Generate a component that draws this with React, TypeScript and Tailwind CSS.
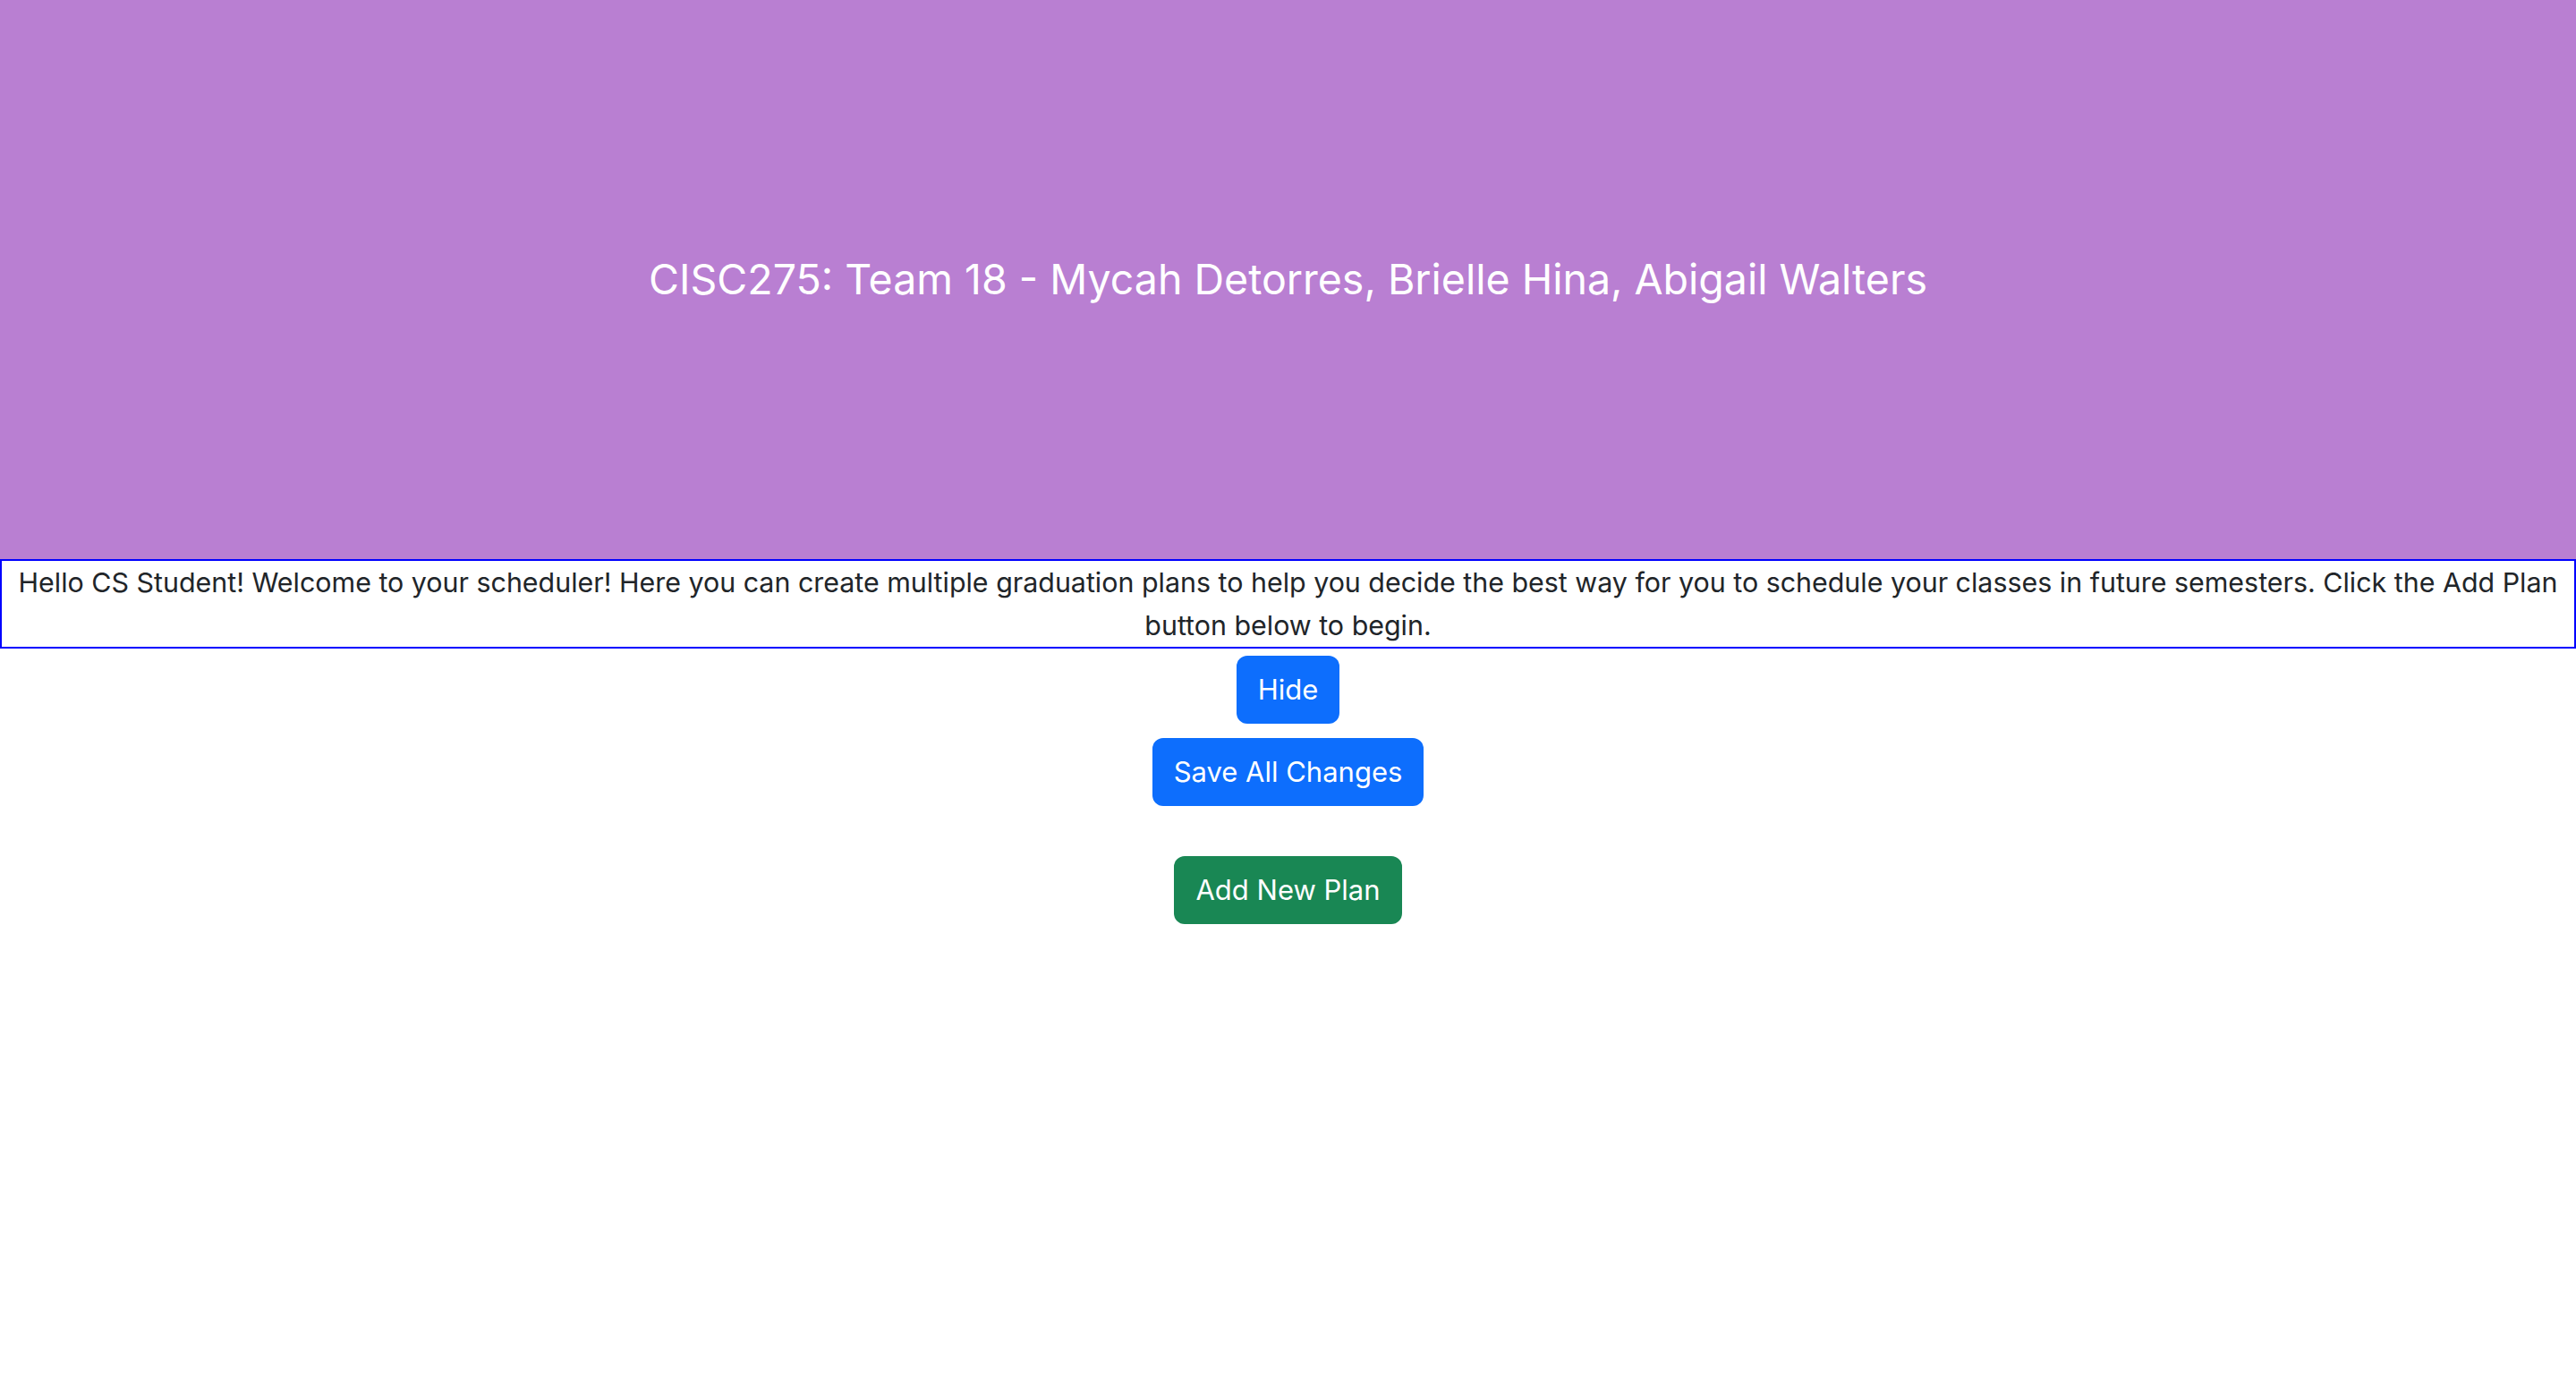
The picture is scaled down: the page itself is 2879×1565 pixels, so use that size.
import React, { useState } from 'react';

// page header + intro text + plan buttons
const App = () => {
  const [showIntro, setShowIntro] = useState(true);

  return (
    <div className="text-center text-[#212529]" style={{ fontFamily: 'Inter, "Noto Sans", sans-serif' }}>
      <header className="min-h-[625px] bg-[#b97fd2] flex flex-col items-center justify-center text-white text-[46.5px]">
        <p>CISC275: Team 18 - Mycah Detorres, Brielle Hina, Abigail Walters</p>
      </header>
      {showIntro && (
        <div className="border-2 border-[#0000ff] px-[8px] text-[30.4px] leading-[48px]">
          Hello CS Student! Welcome to your scheduler! Here you can create multiple graduation plans to help you decide the best way for you to schedule your classes in future semesters. Click the Add Plan button below to begin.
        </div>
      )}
      <div className="flex flex-col items-center">
        <button
          className="m-[8px] rounded-[12px] bg-[#0d6efd] text-white text-[31px] leading-[48px] px-[24px] py-[14px]"
          onClick={() => setShowIntro(!showIntro)}
        >
          {showIntro ? 'Hide' : 'Show'}
        </button>
        <button className="m-[8px] rounded-[12px] bg-[#0d6efd] text-white text-[31px] leading-[48px] px-[24px] py-[14px]">
          Save All Changes
        </button>
        <div className="h-[40px]" />
        <button className="m-[8px] rounded-[12px] bg-[#198754] text-white text-[31px] leading-[48px] px-[24px] py-[14px]">
          Add New Plan
        </button>
      </div>
    </div>
  );
};

export default App;
